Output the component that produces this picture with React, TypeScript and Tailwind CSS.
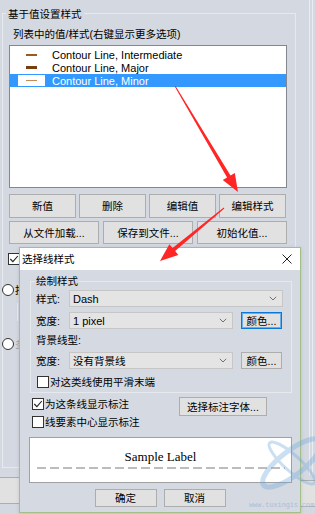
import React from "react";

function Btn({ children, className = "" }: { children: React.ReactNode; className?: string }) {
  return (
    <div className={`flex items-center justify-center bg-[#e1e1e1] border border-[#adadad] text-black ${className}`}>
      {children}
    </div>
  );
}

function Check({ checked = false }: { checked?: boolean }) {
  return (
    <div className="w-[12px] h-[12px] bg-white border border-[#333333] flex items-center justify-center shrink-0">
      {checked && (
        <svg width="10" height="10" viewBox="0 0 10 10">
          <path d="M1.3 5 L3.9 7.6 L8.8 2" fill="none" stroke="#222" strokeWidth="1.1" />
        </svg>
      )}
    </div>
  );
}

function Chevron() {
  return (
    <svg width="8" height="5" viewBox="0 0 8 5">
      <path d="M0.8 0.8 L4 4 L7.2 0.8" fill="none" stroke="#707070" strokeWidth="1" />
    </svg>
  );
}

function Radio() {
  return <div className="w-[12px] h-[12px] rounded-full bg-white border border-[#333333] shrink-0" />;
}

export default function App() {
  return (
    <div className="relative w-[315px] h-[514px] overflow-hidden bg-[#d4d8e0] font-['Liberation_Sans','Noto_Sans_CJK_SC',sans-serif] text-[10.5px] leading-[14px] text-black">
      {/* Background window */}
      <div className="h-[475px] w-[313px] border-r border-[#e9ecf0]">
        <div className="h-full w-[310px] border-r border-[#e9ecf0] pt-[13px] pl-[2px]">
          <div className="w-[294px] h-[455px] border border-[#e6e9ee]">
            <div className="-mt-[7px] ml-[3px] w-fit px-[2px] bg-[#d4d8e0]">基于值设置样式</div>
            <div className="mt-[6px] ml-[10px]">列表中的值/样式(右键显示更多选项)</div>
            <div className="mt-[4px] ml-[6px] w-[278px] h-[143px] bg-white border border-[#828790] pt-[2px]">
              <div className="h-[13px] flex items-center">
                <div className="ml-[8px] w-[27px] h-[11px] flex items-center justify-center">
                  <div className="w-[11px] h-[2px] bg-[#9a5a22]" />
                </div>
                <div className="ml-[7px] text-[11px]">Contour Line, Intermediate</div>
              </div>
              <div className="h-[13px] flex items-center">
                <div className="ml-[8px] w-[27px] h-[11px] flex items-center justify-center">
                  <div className="w-[11px] h-[3px] bg-[#7a3e0a]" />
                </div>
                <div className="ml-[7px] text-[11px]">Contour Line, Major</div>
              </div>
              <div className="h-[13px] flex items-center bg-[#3399ff]">
                <div className="ml-[8px] w-[27px] h-[11px] flex items-center justify-center bg-white">
                  <div className="w-[11px] h-[1.5px] bg-[#c48d58]" />
                </div>
                <div className="ml-[7px] text-[11px] text-white">Contour Line, Minor</div>
              </div>
            </div>
            <div className="mt-[6px] ml-[6px] flex gap-[3px]">
              <Btn className="w-[67px] h-[24px]">新值</Btn>
              <Btn className="w-[67px] h-[24px]">删除</Btn>
              <Btn className="w-[67px] h-[24px]">编辑值</Btn>
              <Btn className="w-[67px] h-[24px]">编辑样式</Btn>
            </div>
            <div className="mt-[3px] ml-[6px] flex gap-[4px]">
              <Btn className="w-[90px] h-[23px]">从文件加载...</Btn>
              <Btn className="w-[90px] h-[23px]">保存到文件...</Btn>
              <Btn className="w-[90px] h-[23px]">初始化值...</Btn>
            </div>
            <div className="mt-[9px] ml-[5px] flex items-center gap-[2px]">
              <Check checked />
            </div>
            <div className="mt-[18px] -ml-[1px] flex items-center gap-[1px] h-[14px]">
              <Radio />
              <span>按</span>
            </div>
            <div className="mt-[6px] ml-[14px] w-[150px] h-[18px] border-l border-[#eceef2]" />
            <div className="mt-[16px] -ml-[1px] flex items-center gap-[1px] h-[14px]">
              <Radio />
              <span className="text-[#9a9a9a]">多</span>
            </div>
          </div>
        </div>
      </div>
      <div className="flex h-[39px]">
        <div className="mt-[2px] -ml-[10px] w-[40px] h-[27px] bg-[#e1e1e1] border border-[#adadad]" />
        <div className="ml-auto mt-[5px] -mr-[10px] w-[40px] h-[27px] bg-[#e1e1e1] border border-[#adadad]" />
      </div>

      {/* Dialog window */}
      <div className="absolute left-[19px] top-[247px] w-[282px] h-[266px] border border-[#a2bf8a] bg-[#d5d9e1] shadow-[0_1px_4px_rgba(0,0,0,0.12)]">
        <div className="h-[22px] bg-white flex items-center justify-between pl-[2px] pr-[8px]">
          <span className="text-[10.5px]">选择线样式</span>
          <svg width="10" height="10" viewBox="0 0 10 10">
            <path d="M0.5 0.5 L9.5 9.5 M9.5 0.5 L0.5 9.5" stroke="#222" strokeWidth="1" />
          </svg>
        </div>
        <div className="pt-[11px]">
          <div className="ml-[10px] w-[262px] h-[112px] border border-[#e6e9ee]">
            <div className="-mt-[8px] ml-[4px] w-fit px-[1px] bg-[#d5d9e1]">绘制样式</div>
            <div className="mt-[2px] flex items-center h-[17px]">
              <span className="ml-[5px] w-[33px]">样式:</span>
              <div className="w-[214px] h-[17px] bg-[#e4e4e4] border border-[#c6c6c6] flex items-center justify-between pl-[3px] pr-[5px]">
                <span className="text-[11px]">Dash</span>
                <Chevron />
              </div>
            </div>
            <div className="mt-[5px] flex items-center h-[17px]">
              <span className="ml-[5px] w-[33px]">宽度:</span>
              <div className="w-[164px] h-[17px] bg-[#e4e4e4] border border-[#c6c6c6] flex items-center justify-between pl-[3px] pr-[5px]">
                <span className="text-[11px]">1 pixel</span>
                <Chevron />
              </div>
              <div className="ml-[8px] w-[41px] h-[17px] flex items-center justify-center bg-[#e1e1e1] border border-[#0a78d7] shadow-[inset_0_0_0_1px_#6aaee8]">
                颜色...
              </div>
            </div>
            <div className="mt-[4px] ml-[5px] h-[14px]">背景线型:</div>
            <div className="mt-[5px] flex items-center h-[17px]">
              <span className="ml-[5px] w-[33px]">宽度:</span>
              <div className="w-[164px] h-[17px] bg-[#e4e4e4] border border-[#c6c6c6] flex items-center justify-between pl-[3px] pr-[5px]">
                <span>没有背景线</span>
                <Chevron />
              </div>
              <Btn className="ml-[8px] w-[41px] h-[17px]">颜色...</Btn>
            </div>
            <div className="mt-[6px] ml-[6px] flex items-center gap-[1px] h-[14px]">
              <Check />
              <span>对这类线使用平滑末端</span>
            </div>
          </div>
          <div className="mt-[4px] flex">
            <div className="ml-[12px] w-[147px]">
              <div className="flex items-center gap-[1px] h-[14px]">
                <Check checked />
                <span>为这条线显示标注</span>
              </div>
              <div className="mt-[4px] flex items-center gap-[1px] h-[14px]">
                <Check />
                <span>线要素中心显示标注</span>
              </div>
            </div>
            <Btn className="w-[88px] h-[19px]">选择标注字体...</Btn>
          </div>
          <div className="mt-[8px] ml-[9px] w-[263px] h-[46px] bg-white border border-[#a0a0a0] flex flex-col items-center">
            <div className="mt-[11px] leading-[15px] text-[13px] font-['Liberation_Serif',serif]">Sample Label</div>
            <svg className="mt-[3px]" width="248" height="2" viewBox="0 0 248 2">
              <line x1="0" y1="1" x2="248" y2="1" stroke="#7a7a7a" strokeWidth="1" strokeDasharray="9 4" />
            </svg>
          </div>
          <div className="mt-[6px] flex justify-center gap-[7px]">
            <Btn className="w-[62px] h-[18px]">确定</Btn>
            <Btn className="w-[62px] h-[18px]">取消</Btn>
          </div>
        </div>
      </div>

      {/* Overlays: watermark + red arrows */}
      <svg className="absolute left-0 top-0 pointer-events-none" width="315" height="514" viewBox="0 0 315 514">
        <g opacity="0.35" fill="none" stroke="#6aa6dc">
          <ellipse cx="292" cy="463" rx="36" ry="12" strokeWidth="5" transform="rotate(-38 292 463)" />
          <ellipse cx="292" cy="463" rx="30" ry="8" strokeWidth="3" transform="rotate(42 292 463)" />
        </g>
        <text x="249" y="507" fontSize="6.8" fill="#a9c0d6" fontFamily="Liberation Mono, monospace">www.tuxingis.com</text>
        <polygon
          fill="#ff2626"
          points="174.57,86.26 227.08,177.52 222.78,180.08 238,192 234.82,172.92 230.52,175.48 175.43,85.74"
        />
        <polygon
          fill="#ff2626"
          points="223.68,207.62 172.58,247.98 169.39,244.13 160,261 178.33,254.91 175.14,251.06 224.32,208.38"
        />
      </svg>
    </div>
  );
}
